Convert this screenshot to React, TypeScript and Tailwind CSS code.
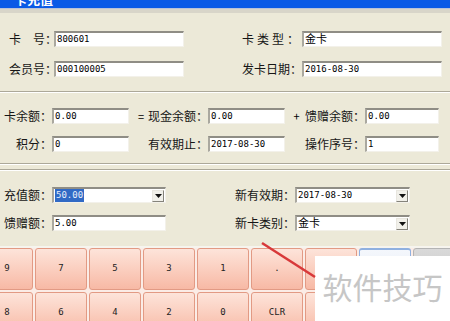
import React from 'react';

const mono = "font-['DejaVu_Sans_Mono','Noto_Sans_CJK_SC',monospace]";
const cjk = "font-['Noto_Sans_CJK_SC','Noto_Sans',sans-serif]";

function Field({ w, children, cn = '' }: { w: string; children?: React.ReactNode; cn?: string }) {
  return (
    <div
      className={`${w} h-[16px] shrink-0 bg-white border-t-2 border-l-2 border-r border-b border-t-[#8f8d85] border-l-[#aaa89f] border-r-[#f3f1ea] border-b-[#f3f1ea] flex items-center pl-[1px] text-[9px] leading-none text-black overflow-hidden whitespace-nowrap ${mono} ${cn}`}
    >
      {children}
    </div>
  );
}

function Combo({ w, children }: { w: string; children?: React.ReactNode }) {
  return (
    <div
      className={`${w} h-[16px] shrink-0 bg-white border-t-2 border-l-2 border-r border-b border-t-[#8f8d85] border-l-[#aaa89f] border-r-[#f3f1ea] border-b-[#f3f1ea] flex items-center justify-between text-[9px] leading-none text-black whitespace-nowrap ${mono}`}
    >
      <div className="pl-[1px] flex items-center">{children}</div>
      <div className="w-[12px] h-[12px] mr-[1px] bg-[#f1f0ea] border border-t-[#e8e6df] border-l-[#e8e6df] border-r-[#85837b] border-b-[#85837b] flex items-center justify-center">
        <svg width="7" height="4" viewBox="0 0 7 4">
          <path d="M0 0h7L3.5 4z" fill="#111" />
        </svg>
      </div>
    </div>
  );
}

function Label({ w, children, cn = '' }: { w: string; children: React.ReactNode; cn?: string }) {
  return (
    <div className={`${w} shrink-0 flex justify-end whitespace-nowrap text-[12px] leading-none text-[#161616] ${cjk} ${cn}`}>
      {children}
    </div>
  );
}

function Etched() {
  return <div className="h-[2px] border-t border-t-[#aca899] border-b border-b-white" />;
}

const row1 = ['9', '7', '5', '3', '1', '.', '', '', ''];
const row2 = ['8', '6', '4', '2', '0', 'CLR', '', '', ''];

function Key({ label, i }: { label: string; i: number }) {
  let look = 'bg-linear-to-b from-[#fde4da] to-[#f7b9a5] border-[#e29a84]';
  if (i === 7) look = 'bg-linear-to-b from-[#f4f7fc] to-[#e6ecf6] border-[#8fb0e0] border-t-2';
  if (i === 8) look = 'bg-linear-to-b from-[#d9d9d9] to-[#c8c8c8] border-[#b4b4b4]';
  return (
    <div
      className={`w-[52px] h-[42px] shrink-0 rounded-[3px] border ${look} flex items-center justify-center text-[9px] text-[#222] ${mono}`}
    >
      {label}
    </div>
  );
}

export default function App() {
  return (
    <div className={`w-[450px] h-[321px] overflow-hidden relative bg-[#ece9d8] ${cjk}`}>
      {/* title bar */}
      <div className="h-[8px] bg-[#0a5ae6] overflow-hidden">
        <div className="-mt-[8px] ml-[14px] text-[13px] leading-[14px] font-bold text-white">卡充值</div>
      </div>
      <div className="h-[5px] bg-[#d8d5c9] border-t border-t-[#b9c3d8]" />

      {/* card info */}
      <div className="pt-[18px] pb-[14px] flex flex-col gap-[14px]">
        <div className="flex items-center h-[16px]">
          <div className="w-[54px] shrink-0 pl-[9px] whitespace-nowrap text-[12px] leading-none text-[#161616]">卡　号：</div>
          <Field w="w-[130px]">800601</Field>
          <Label w="w-[118px]" cn="tracking-[3px]">卡类型：</Label>
          <Field w="w-[140px]" cn="text-[11px]">金卡</Field>
        </div>
        <div className="flex items-center h-[16px]">
          <div className="w-[54px] shrink-0 pl-[9px] whitespace-nowrap text-[12px] leading-none text-[#161616]">会员号：</div>
          <Field w="w-[130px]">000100005</Field>
          <Label w="w-[118px]">发卡日期：</Label>
          <Field w="w-[140px]">2016-08-30</Field>
        </div>
      </div>
      <Etched />

      {/* balances */}
      <div className="pt-[15px] pb-[11px] flex flex-col gap-[12px]">
        <div className="flex items-center h-[16px]">
          <Label w="w-[52px]">卡余额：</Label>
          <Field w="w-[77px]">0.00</Field>
          <div className="w-[24px] shrink-0 text-center text-[11px] leading-none">=</div>
          <Label w="w-[55px]">现金余额：</Label>
          <Field w="w-[77px]">0.00</Field>
          <div className="w-[23px] shrink-0 text-center text-[11px] leading-none">+</div>
          <Label w="w-[57px]">馈赠余额：</Label>
          <Field w="w-[74px]">0.00</Field>
        </div>
        <div className="flex items-center h-[16px]">
          <Label w="w-[52px]">积分：</Label>
          <Field w="w-[77px]">0</Field>
          <div className="w-[24px] shrink-0" />
          <Label w="w-[55px]">有效期止：</Label>
          <Field w="w-[77px]">2017-08-30</Field>
          <div className="w-[23px] shrink-0" />
          <Label w="w-[57px]">操作序号：</Label>
          <Field w="w-[74px]">1</Field>
        </div>
      </div>
      <Etched />
      <div className="h-[4px]" />
      <Etched />

      {/* recharge */}
      <div className="pt-[16px] pb-[15px] flex flex-col gap-[12px]">
        <div className="flex items-center h-[16px]">
          <Label w="w-[52px]">充值额：</Label>
          <Combo w="w-[114px]">
            <span className="bg-[#316ac5] text-[#e8eefa] px-[1px] py-[2px]">50.00</span>
          </Combo>
          <Label w="w-[129px]">新有效期：</Label>
          <Combo w="w-[115px]">2017-08-30</Combo>
        </div>
        <div className="flex items-center h-[16px]">
          <Label w="w-[52px]">馈赠额：</Label>
          <Field w="w-[114px]">5.00</Field>
          <Label w="w-[129px]">新卡类别：</Label>
          <Combo w="w-[115px]">
            <span className="text-[11px]">金卡</span>
          </Combo>
        </div>
      </div>
      <div className="h-[2px] bg-[#f6f4ee]" />

      {/* keypad */}
      <div className="bg-[#fbece6] flex flex-col gap-[2px] -ml-[19px]">
        <div className="flex gap-[2px]">
          {row1.map((k, i) => (
            <Key key={i} label={k} i={i} />
          ))}
        </div>
        <div className="flex gap-[2px]">
          {row2.map((k, i) => (
            <Key key={i} label={k} i={i} />
          ))}
        </div>
      </div>

      {/* watermark overlay */}
      <div className="absolute left-[315px] top-[256px] w-[135px] h-[65px] bg-white flex items-center justify-center pb-[6px] text-[30px] leading-none text-[#c6c6c6]">
        软件技巧
      </div>
      <svg className="absolute left-0 top-0 pointer-events-none" width="450" height="321">
        <line x1="262" y1="243" x2="315" y2="277" stroke="#d8393a" strokeWidth="2.5" />
      </svg>
    </div>
  );
}
